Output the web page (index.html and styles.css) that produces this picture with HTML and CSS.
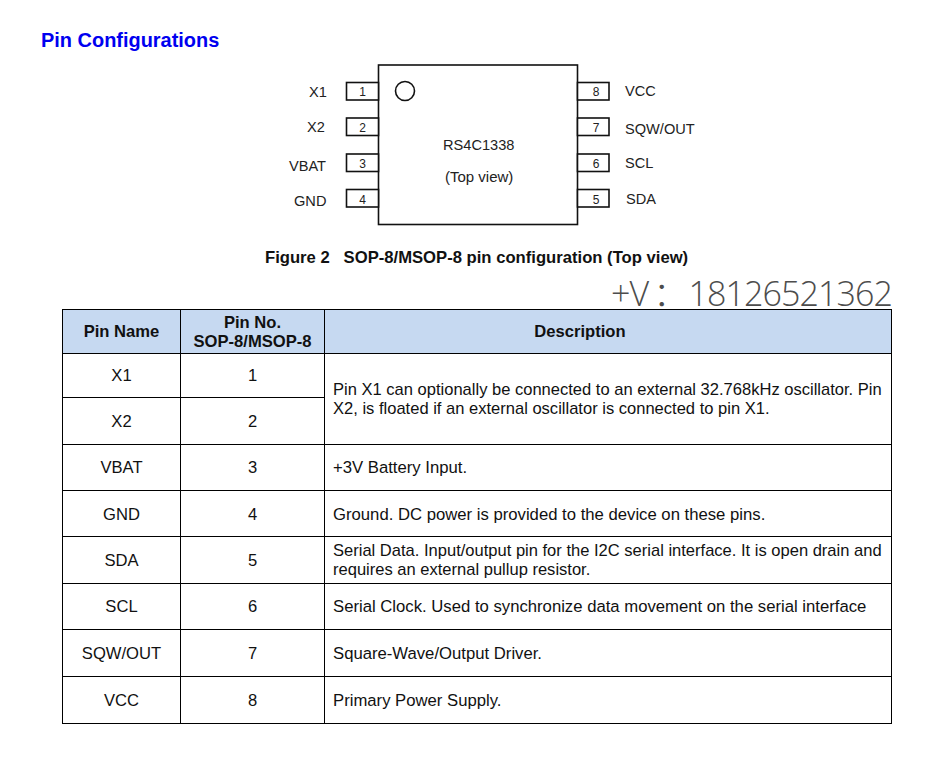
FILE: index.html
```html
<!DOCTYPE html>
<html lang="en">
<head>
<meta charset="utf-8">
<title>Pin Configurations</title>
<link rel="stylesheet" href="styles.css">
</head>
<body>
<main class="page">
  <h1 class="title">Pin Configurations</h1>
  <svg class="diagram" width="430" height="180" viewBox="280 55 430 180" role="img" aria-label="RS4C1338 pinout">
    <g class="shape">
      <rect x="378.5" y="65" width="199" height="159.5"/>
      <circle cx="405" cy="91" r="9.5"/>
      <rect x="346.5" y="82.5" width="32" height="17.5"/>
      <rect x="346.5" y="118" width="32" height="17.5"/>
      <rect x="346.5" y="154" width="32" height="17.5"/>
      <rect x="346.5" y="189.5" width="32" height="17.5"/>
      <rect x="577.5" y="82.5" width="31.5" height="17.5"/>
      <rect x="577.5" y="118" width="31.5" height="17.5"/>
      <rect x="577.5" y="154" width="31.5" height="17.5"/>
      <rect x="577.5" y="189.5" width="31.5" height="17.5"/>
    </g>
    <g class="label">
      <text x="309" y="97">X1</text>
      <text x="307" y="132">X2</text>
      <text x="289" y="171">VBAT</text>
      <text x="294" y="206">GND</text>
      <text x="625" y="96">VCC</text>
      <text x="625" y="134">SQW/OUT</text>
      <text x="625" y="168">SCL</text>
      <text x="626" y="204">SDA</text>
      <text x="443" y="150">RS4C1338</text>
      <text class="wide" x="445" y="182">(Top view)</text>
    </g>
    <g class="num">
      <text x="362.5" y="96">1</text>
      <text x="362.5" y="132">2</text>
      <text x="362.5" y="168">3</text>
      <text x="362.5" y="204">4</text>
      <text x="596" y="96">8</text>
      <text x="596" y="132">7</text>
      <text x="596" y="168">6</text>
      <text x="596" y="204">5</text>
    </g>
  </svg>
  <p class="caption">Figure 2&nbsp;&nbsp; SOP-8/MSOP-8 pin configuration (Top view)</p>
  <div class="watermark"><span class="wm-prefix">+V</span><span class="wm-colon">：</span>18126521362</div>
  <table class="pins">
    <colgroup><col class="c-name"><col class="c-no"><col class="c-desc"></colgroup>
    <thead>
      <tr class="r-head"><th>Pin Name</th><th>Pin No.<br>SOP-8/MSOP-8</th><th class="h-desc">Description</th></tr>
    </thead>
    <tbody>
      <tr class="r44"><td>X1</td><td>1</td><td class="desc" rowspan="2">Pin X1 can optionally be connected to an external 32.768kHz oscillator. Pin X2, is floated if an external oscillator is connected to pin X1.</td></tr>
      <tr class="r47"><td>X2</td><td>2</td></tr>
      <tr class="r46"><td>VBAT</td><td>3</td><td class="desc single">+3V Battery Input.</td></tr>
      <tr class="r46 low"><td>GND</td><td>4</td><td class="desc single">Ground. DC power is provided to the device on these pins.</td></tr>
      <tr class="r47"><td>SDA</td><td>5</td><td class="desc">Serial Data. Input/output pin for the I2C serial interface. It is open drain and requires an external pullup resistor.</td></tr>
      <tr class="r46"><td>SCL</td><td>6</td><td class="desc single">Serial Clock. Used to synchronize data movement on the serial interface</td></tr>
      <tr class="r47"><td>SQW/OUT</td><td>7</td><td class="desc single">Square-Wave/Output Driver.</td></tr>
      <tr class="r47"><td>VCC</td><td>8</td><td class="desc single">Primary Power Supply.</td></tr>
    </tbody>
  </table>
</main>
</body>
</html>
```
FILE: styles.css
```css
* { box-sizing: border-box; }
html, body { margin: 0; background: #fff; }
body { font-family: "Liberation Sans", Arial, sans-serif; color: #111; }
.page { width: 939px; height: 768px; overflow: hidden; padding-top: 28px; }
.title { margin: 0 0 0 41px; font-size: 19.95px; line-height: 24px; font-weight: 700; color: #0000f0; }
.diagram { display: block; margin: 3px 0 0 280px; }
.shape rect, .shape circle { fill: #fff; stroke: #111; stroke-width: 1.6; }
.label text { font-size: 14.6px; fill: #222; }
.label .wide { font-size: 15px; }
.num text { font-size: 12px; fill: #222; text-anchor: middle; }
.caption { margin: 13px 0 0; padding-left: 265px; font-size: 16.65px; line-height: 20px; font-weight: 700; white-space: pre; }
.watermark { height: 37px; margin-top: 4px; padding-right: 47px; text-align: right; font-family: "Open Sans", "Noto Sans CJK SC", sans-serif; font-weight: 300; font-size: 34px; letter-spacing: -0.9px; line-height: 42px; color: #4d4d4d; white-space: nowrap; }
.wm-prefix { margin-right: 5px; }
.wm-colon { margin-right: 2px; }
.pins { margin: 0 0 0 62px; width: 829px; table-layout: fixed; border-collapse: collapse; font-size: 16.6px; line-height: 19px; }
.c-name { width: 118px; }
.c-no { width: 144px; }
.c-desc { width: 567px; }
.pins th, .pins td { border: 1px solid #000; padding: 0; text-align: center; vertical-align: middle; }
.pins th { background: #c6d9f1; font-weight: 700; }
.pins th.h-desc { padding-right: 56px; }
.pins td.desc { text-align: left; padding: 0 4px 0 8px; font-size: 16.55px; }
.pins td.single { font-size: 16.7px; }
.pins .low td { padding-top: 2px; }
.r-head { height: 44px; }
.r44 { height: 44px; }
.r46 { height: 46px; }
.r47 { height: 47px; }
```
